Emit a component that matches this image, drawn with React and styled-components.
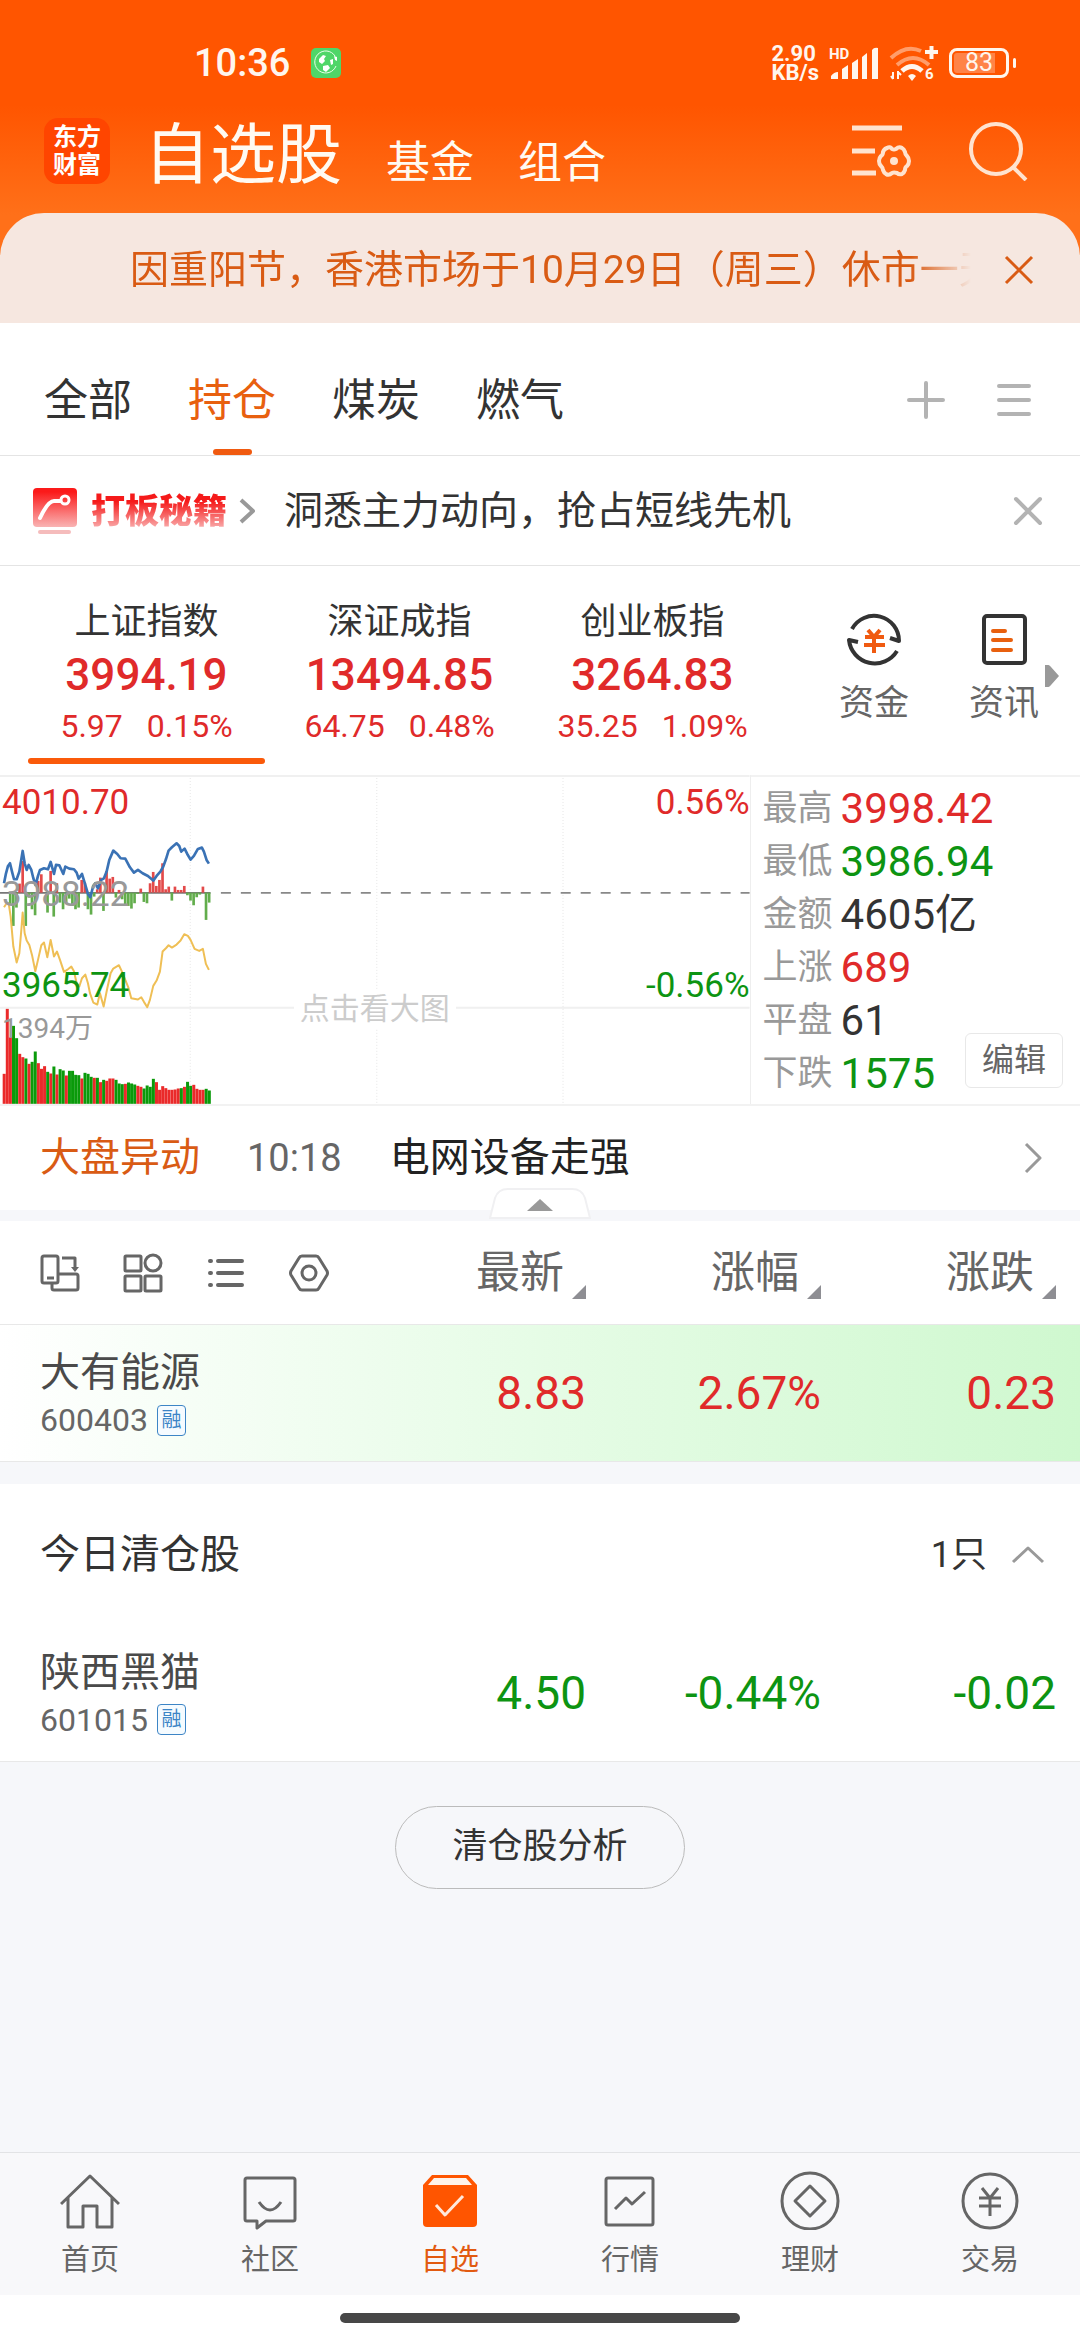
import styled, { createGlobalStyle, css } from 'styled-components';

const UP = '#e02a2a';
const DOWN = '#0d9412';
const BRAND = '#ff5500';

const GlobalStyle = createGlobalStyle`
  * {
    box-sizing: border-box;
  }
  body {
    margin: 0;
    background: #fff;
    color: #333;
    font-family: Roboto, "Noto Sans CJK SC", sans-serif;
  }
  button {
    border: 0;
    padding: 0;
    margin: 0;
    background: none;
    font: inherit;
    color: inherit;
  }
  a {
    color: inherit;
    text-decoration: none;
  }
  h1, h2 {
    margin: 0;
    font-weight: 400;
  }
  svg {
    display: block;
    flex: none;
  }
`;

const tone = (value) => (value > 0 ? UP : value < 0 ? DOWN : '#333');

const Page = styled.div`
  display: flex;
  flex-direction: column;
  min-height: 100vh;
`;

/* ---------- header ---------- */

const Header = styled.header`
  background: linear-gradient(${BRAND} 105px, #ff7019 215px);
`;

const StatusBar = styled.div`
  display: flex;
  align-items: center;
  height: 104px;
  padding: 21px 64px 0 194px;
  color: #fff6ee;
`;

const Clock = styled.span`
  font-size: 38px;
  line-height: 40px;
  font-weight: 500;
  margin-right: 21px;
`;

const StatusIcons = styled.div`
  display: flex;
  align-items: center;
  gap: 10px;
  margin-left: auto;
`;

const NetSpeed = styled.span`
  font-size: 22px;
  line-height: 19px;
  font-weight: 700;
`;

const Battery = styled.span`
  display: flex;
  align-items: center;
  justify-content: center;
  width: 60px;
  height: 30px;
  border: 3px solid currentColor;
  border-radius: 8px;
  background: linear-gradient(to right, #ff8347 83%, transparent 83%) content-box;
  padding: 2px;
  font-size: 25px;
  line-height: 20px;
`;

const BatteryTip = styled.span`
  width: 3px;
  height: 10px;
  margin-left: -6px;
  border-radius: 2px;
  background: currentColor;
`;

const TitleRow = styled.div`
  display: flex;
  align-items: center;
  height: 109px;
  padding: 0 52px 15px 44px;
`;

const Logo = styled.span`
  width: 66px;
  height: 66px;
  padding-top: 5px;
  border-radius: 14px;
  background: #ff4500;
  color: #fff;
  font-size: 24px;
  line-height: 28px;
  font-weight: 700;
  text-align: center;
`;

const Titles = styled.nav`
  display: flex;
  align-items: baseline;
  gap: 44px;
  flex: 1;
  margin-left: 34px;
  padding-top: 10px;
  color: #fffaf2;
`;

const Title = styled.button`
  font-size: ${(p) => (p.$main ? 66 : 44)}px;
  line-height: ${(p) => (p.$main ? 94 : 60)}px;
`;

const HeaderTools = styled.div`
  display: flex;
  align-items: center;
  gap: 56px;
`;

const Notice = styled.div`
  display: flex;
  align-items: center;
  height: 110px;
  padding: 3px 46px 0 130px;
  border-radius: 44px 44px 0 0;
  background: #f6e7e0;
  color: #d95b14;
`;

const NoticeText = styled.p`
  flex: 1;
  margin: 0 33px 0 0;
  overflow: hidden;
  white-space: nowrap;
  font-size: 39px;
  line-height: 54px;
  mask-image: linear-gradient(to right, #000 calc(100% - 60px), transparent);
`;

/* ---------- group tabs and promo ---------- */

const Tabs = styled.div`
  display: flex;
  align-items: center;
  gap: 56px;
  height: 133px;
  padding: 0 47px 0 44px;
  border-bottom: 1px solid #e4e4e4;
`;

const Tab = styled.button`
  display: flex;
  flex-direction: column;
  align-items: center;
  justify-content: flex-end;
  height: 132px;
  font-size: 44px;
  line-height: 60px;
  color: ${(p) => (p.$active ? '#e8600f' : '#333')};

  &::after {
    content: '';
    width: 39px;
    height: 6px;
    margin-top: 18px;
    border-radius: 3px;
    background: ${(p) => (p.$active ? '#f05a10' : 'transparent')};
  }
`;

const TabTools = styled.div`
  display: flex;
  gap: 50px;
  margin-left: auto;
  padding-top: 22px;
`;

const Promo = styled.div`
  display: flex;
  align-items: center;
  height: 110px;
  padding: 0 34px 0 32px;
  border-bottom: 1px solid #e4e4e4;
`;

const PromoTag = styled.span`
  margin: 0 12px 0 13px;
  font-size: 34px;
  line-height: 48px;
  font-weight: 900;
  color: transparent;
  background: linear-gradient(#f51a1a 30%, #f9aaaa 85%);
  background-clip: text;
`;

const PromoText = styled.a`
  flex: 1;
  margin-left: 29px;
  font-size: 39px;
  line-height: 54px;
`;

/* ---------- indices ---------- */

const IndexBar = styled.section`
  display: flex;
  height: 209px;
  padding: 28px 11px 0 20px;
`;

const IndexList = styled.div`
  display: flex;
  flex: 1;
  margin-right: 30px;
`;

const IndexItem = styled.button`
  display: flex;
  flex-direction: column;
  align-items: center;
  flex: 1;
  color: ${UP};

  &::after {
    content: '';
    align-self: stretch;
    height: 6px;
    margin: 6px 8px 0;
    border-radius: 3px;
    background: ${(p) => (p.$active ? '#fa5a0a' : 'transparent')};
  }
`;

const IndexName = styled.span`
  font-size: 36px;
  line-height: 56px;
  color: #333;
`;

const IndexValue = styled.span`
  font-size: 44px;
  line-height: 50px;
  font-weight: 500;
`;

const IndexChange = styled.span`
  display: flex;
  gap: 24px;
  font-size: 32px;
  line-height: 52px;
`;

const Shortcuts = styled.div`
  position: relative;
  display: flex;
`;

const Shortcut = styled.a`
  display: flex;
  flex-direction: column;
  align-items: center;
  width: 130px;
  padding-top: 17px;
  font-size: 35px;
  line-height: 54px;
  color: #666;

  svg {
    margin-bottom: 10px;
  }
`;

const MoreArrow = styled.svg`
  position: absolute;
  right: 10px;
  top: 71px;
`;

/* ---------- intraday chart ---------- */

const Market = styled.section`
  display: flex;
  border-bottom: 2px solid #f2f2f2;
`;

const ChartBox = styled.div`
  position: relative;
  flex: 0 0 69.5%;
  border-right: 1px solid #eee;

  svg {
    width: 100%;
    height: auto;
  }
`;

const ChartLabel = styled.span`
  position: absolute;
  top: ${(p) => p.$top}px;
  ${(p) => (p.$right ? 'right: 0' : 'left: 2px')};
  font-size: ${(p) => (p.$small ? 28 : 35)}px;
  line-height: 40px;
  color: ${(p) => p.$color};
`;

const ChartHint = styled.span`
  position: absolute;
  left: 50%;
  top: 214px;
  transform: translateX(-50%);
  padding: 0 6px;
  background: #fff;
  white-space: nowrap;
  font-size: 30px;
  line-height: 40px;
  color: #ccc;
`;

const Stats = styled.div`
  position: relative;
  flex: 1;
  padding: 5px 0 0 12px;
  border-top: 2px solid #f2f2f2;
`;

const Stat = styled.div`
  display: flex;
  align-items: center;
  gap: 8px;
  font-size: 42px;
  line-height: 53px;
  color: ${(p) => p.$color};
`;

const StatLabel = styled.span`
  font-size: 35px;
  color: #999;
`;

const EditButton = styled.button`
  position: absolute;
  right: 17px;
  bottom: 16px;
  width: 98px;
  height: 55px;
  border: 1px solid #e8e8e8;
  border-radius: 6px;
  background: #fff;
  font-size: 32px;
  line-height: 52px;
  color: #666;
`;

/* ---------- ticker ---------- */

const Ticker = styled.a`
  position: relative;
  display: flex;
  align-items: center;
  height: 115px;
  padding: 0 38px 11px 40px;
  background: linear-gradient(#fff 104px, #f6f7fa 104px);
  font-size: 40px;
  line-height: 54px;
  color: #222;
`;

const TickerKind = styled.span`
  color: #d95b14;
`;

const TickerTime = styled.span`
  margin: 0 48px 0 47px;
  font-size: 38px;
  color: #666;
`;

const Grow = styled.span`
  flex: 1;
`;

const Handle = styled.svg`
  position: absolute;
  left: 50%;
  bottom: 2px;
  transform: translateX(-50%);
`;

/* ---------- stock tables ---------- */

const StockTable = styled.table`
  width: 100%;
  table-layout: fixed;
  border-collapse: collapse;
  background: #fff;

  th, td {
    padding: 0;
    font-weight: 400;
    text-align: right;
  }
  th:first-child, td:first-child {
    padding-left: 40px;
    text-align: left;
  }
  th:last-child, td:last-child {
    padding-right: 24px;
  }
`;

const Col = styled.col`
  width: ${(p) => p.$width}px;
`;

const HeadRow = styled.tr`
  height: 104px;
  border-bottom: 1px solid #e8e8e8;
  color: #666;
`;

const ListTools = styled.div`
  display: flex;
  gap: 43px;
`;

const SortButton = styled.button`
  display: inline-flex;
  align-items: flex-end;
  gap: 8px;
  font-size: 44px;
  line-height: 60px;

  svg {
    margin-bottom: 4px;
  }
`;

const StockRow = styled.tr`
  height: 137px;
  border-bottom: 1px solid #e8e8e8;
  ${(p) => p.$flash && css`
    background: linear-gradient(to right, #fff, #e6fce6 50%, #cff8cf);
  `}
`;

const StockName = styled.div`
  padding-top: 2px;
  font-size: 40px;
  line-height: 52px;
  color: #4a4a4a;
`;

const StockCode = styled.div`
  display: flex;
  align-items: center;
  gap: 9px;
  font-size: 32px;
  line-height: 42px;
  color: #666;
`;

const MarginTag = styled.span`
  width: 29px;
  height: 31px;
  border: 1px solid #3d85c6;
  border-radius: 4px;
  background: #f5fbff;
  font-size: 20px;
  line-height: 29px;
  text-align: center;
  color: #3d85c6;
`;

const Quote = styled.td`
  font-size: 46px;
  line-height: 60px;
  color: ${(p) => p.$color};
`;

const ClearedHead = styled.div`
  display: flex;
  align-items: center;
  height: 140px;
  margin-top: 22px;
  padding: 2px 35px 0 40px;
  background: #fff;
  line-height: 54px;

  h2 {
    flex: 1;
    font-size: 40px;
  }
`;

const Count = styled.span`
  margin-right: 24px;
  font-size: 36px;
`;

const Content = styled.main`
  flex: 1;
  display: flex;
  flex-direction: column;
  background: #f6f7fa;
`;

const AnalyseButton = styled.button`
  align-self: center;
  width: 290px;
  height: 83px;
  margin: 44px 0;
  border: 1px solid #bbb;
  border-radius: 42px;
  font-size: 35px;
  line-height: 80px;
`;

/* ---------- bottom navigation ---------- */

const BottomNav = styled.nav`
  display: flex;
  height: 143px;
  border-top: 1px solid #e2e3e5;
  background: #f8f8fa;
`;

const NavItem = styled.a`
  display: flex;
  flex-direction: column;
  align-items: center;
  flex: 1;
  padding-top: 17px;
  font-size: 29px;
  line-height: 40px;
  color: ${(p) => (p.$active ? '#e25a10' : '#666')};

  svg {
    margin-bottom: 10px;
  }
`;

const HomeIndicator = styled.div`
  display: flex;
  justify-content: center;
  height: 45px;
  padding-top: 18px;

  &::after {
    content: '';
    width: 37%;
    height: 10px;
    border-radius: 5px;
    background: #474747;
  }
`;

/* ---------- icons ---------- */

function Icon({ w = 60, h = w, stroke = 'currentColor', sw = 3, children }) {
  return (
    <svg width={w} height={h} viewBox={`0 0 ${w} ${h}`} fill="none" stroke={stroke}
      strokeWidth={sw} strokeLinejoin="round" aria-hidden="true">
      {children}
    </svg>
  );
}

const GlobeIcon = () => (
  <Icon w={30} sw={1}>
    <rect width="30" height="30" rx="5" fill="#4fd668" stroke="none" />
    <path d="M24 8a11 11 0 1 0 1 10" stroke="#e8ffe8" />
    <path d="M8 11l4-4 3 1-2 3 1 2-3 3-3-2zM12 18l5-1 2 3-4 4-3-2zM19 12l3-1v5l-2 1zM23 8l3 1v4l-2-1z" fill="#fff" stroke="none" />
  </Icon>
);

const SignalIcon = () => (
  <Icon w={50} h={36} sw={0}>
    <g fill="currentColor">
      <path d="M2 34v-3q3-4 7-4v7zM13 34V24l6-4v14zM23 34V18l6-4v20zM33 34V12l5-4v26zM43 34V5q2-3 6-2v31z" />
    </g>
    <text x="0" y="14" fontSize="15" fontWeight="700" fill="currentColor">HD</text>
  </Icon>
);

const WifiIcon = () => (
  <Icon w={50} h={40} sw={4}>
    <path d="M2 15Q17 1 32 8" opacity=".45" />
    <path d="M8 22Q24 8 40 22" opacity=".45" />
    <path d="M13 28q10-9 20 0" strokeWidth="5" />
    <path d="M19 33q4-4 8 0l-4 5z" fill="currentColor" stroke="none" />
    <path d="M36 9h13M42.500 3v13" />
    <path d="M4 29v7M9 28v8M2 33l2 3M9 29l3 3" strokeWidth="2" />
    <text x="36" y="36" fontSize="15" fontWeight="700" fill="currentColor" stroke="none">6</text>
  </Icon>
);

const ListSettingIcon = () => (
  <Icon w={62} h={56} stroke="#ffe3cf" sw={5}>
    <path d="M2 5h50M2 28h23M2 50h24" />
    <path d="M37 25q3-2 5 1 2 1 4 0 3-3 6-1 2 1 3 4 0 2 2 4 2 2 2 5t-2 5q-2 1-2 4-1 3-3 4-3 1-5-1-3-1-5 0-3 3-6 1-2-1-3-4 0-2-2-4-2-2-2-5t2-5q2-1 2-4 1-3 4-4z" strokeWidth="4" />
    <circle cx="44" cy="38" r="4" fill="#ffe3cf" stroke="none" />
  </Icon>
);

const SearchIcon = () => (
  <Icon w={60} stroke="#ffe3cf" sw={4}>
    <circle cx="28" cy="28" r="25" />
    <path d="M45 46l13 13" />
  </Icon>
);

const CloseIcon = ({ sw = 3 }) => (
  <Icon w={30} sw={sw}>
    <path d="M2 2l26 26M28 2L2 28" />
  </Icon>
);

const PromoIcon = () => (
  <Icon w={46} h={48}>
    <defs>
      <linearGradient id="promo" x1="0" y1="0" x2="0" y2="1">
        <stop offset=".1" stopColor="#fb1a1a" />
        <stop offset="1" stopColor="#f9b4b4" />
      </linearGradient>
    </defs>
    <rect x="1" y="1" width="44" height="39" rx="4" fill="url(#promo)" stroke="none" />
    <path d="M8 31q8-17 14-17h6" stroke="#fff" strokeWidth="4" strokeLinecap="round" />
    <circle cx="33" cy="13" r="4" stroke="#fff" />
    <path d="M8 45h29" stroke="#f5bcbc" strokeWidth="4" strokeLinecap="round" />
  </Icon>
);

const ChevronIcon = ({ w = 16, h = 30, sw = 3 }) => (
  <Icon w={w} h={h} sw={sw} stroke="#999">
    <path d={`M2 2l${w - 4} ${h / 2 - 2}L2 ${h - 2}`} />
  </Icon>
);

const FundIcon = () => (
  <Icon w={56} stroke="#333" sw={4}>
    <path d="M6 18A25 25 0 0 1 53 30l-9-3" />
    <path d="M12 31l-9-2A26 26 0 0 0 51 40" />
    <path d="M22 19l6 7 6-7M19 26h19M18 34h21M28 26v16" stroke="#f05a10" />
  </Icon>
);

const NewsIcon = () => (
  <Icon w={56} stroke="#333" sw={4}>
    <rect x="8" y="5" width="41" height="47" rx="3" />
    <path d="M17 20h12M17 29h18M17 39h18" stroke="#e8600f" strokeWidth="4" strokeLinecap="round" />
  </Icon>
);

const CopyDeviceIcon = () => (
  <Icon w={40} sw={3}>
    <rect x="2" y="3" width="16" height="27" rx="2" />
    <path d="M7 25h7M18 21h18q2 0 2 2v12q0 2-2 2H14q-2 0-2-2v-5M22 5h13v10" />
    <path d="M31 14h8l-4 5z" fill="currentColor" stroke="none" />
  </Icon>
);

const GridIcon = () => (
  <Icon w={40} sw={3}>
    <rect x="2" y="3" width="16" height="15" rx="1" />
    <circle cx="30" cy="10" r="8" />
    <rect x="2" y="23" width="16" height="15" rx="1" />
    <rect x="22" y="23" width="16" height="15" rx="1" />
  </Icon>
);

const BulletsIcon = () => (
  <Icon w={40} sw={4}>
    <path d="M4 8h1M4 20h1M4 32h1M12 8h24M12 20h24M12 32h24" strokeLinecap="round" />
  </Icon>
);

const NutIcon = () => (
  <Icon w={40} sw={3}>
    <path d="M13 3h14q2 0 3 2l8 13q1 2 0 4l-8 13q-1 2-3 2H13q-2 0-3-2L2 22q-1-2 0-4l8-13q1-2 3-2z" />
    <circle cx="20" cy="20" r="7" />
  </Icon>
);

const SortMark = () => (
  <Icon w={14}>
    <path d="M14 0v14H0z" fill="#8e8e93" stroke="none" />
  </Icon>
);

const navIcons = {
  home: <path d="M1 34L30 6l29 28M8 28v29h15V36h14v21h15V28" />,
  community: (
    <>
      <path d="M7 8h46q2 0 2 2v39q0 2-2 2H26l-9 7v-7H7q-2 0-2-2V10q0-2 2-2z" />
      <path d="M19 32q11 16 22 0" />
    </>
  ),
  watch: (
    <>
      <path d="M3 15l9-10h36l9 10v38q0 4-4 4H7q-4 0-4-4z" fill={BRAND} stroke="none" />
      <path d="M14 8h32l6 7H8z" fill="#fff3ea" stroke="none" />
      <path d="M16 35l9 10 18-19" stroke="#ffe9dc" />
    </>
  ),
  quotes: (
    <>
      <rect x="6" y="8" width="47" height="47" rx="2" />
      <path d="M15 39l11-11 6 6 13-12" />
    </>
  ),
  wealth: (
    <>
      <circle cx="30" cy="31" r="28" />
      <path d="M30 16l15 15-15 15-15-15z" />
    </>
  ),
  trade: (
    <>
      <circle cx="30" cy="31" r="27" />
      <path d="M22 18l8 10 8-10M19 28h22M19 36h22M30 28v18" />
    </>
  ),
};

/* ---------- data ---------- */

const groups = ['全部', '持仓', '煤炭', '燃气'];

const indices = [
  { name: '上证指数', value: '3994.19', change: '5.97', percent: '0.15%' },
  { name: '深证成指', value: '13494.85', change: '64.75', percent: '0.48%' },
  { name: '创业板指', value: '3264.83', change: '35.25', percent: '1.09%' },
];

const stats = [
  { label: '最高', value: '3998.42', dir: 1 },
  { label: '最低', value: '3986.94', dir: -1 },
  { label: '金额', value: '4605亿', dir: 0 },
  { label: '上涨', value: '689', dir: 1 },
  { label: '平盘', value: '61', dir: 0 },
  { label: '下跌', value: '1575', dir: -1 },
];

const holding = { name: '大有能源', code: '600403', last: '8.83', percent: '2.67%', change: '0.23', dir: 1 };
const cleared = { name: '陕西黑猫', code: '601015', last: '4.50', percent: '-0.44%', change: '-0.02', dir: -1 };

const navItems = [
  { label: '首页', icon: 'home' },
  { label: '社区', icon: 'community' },
  { label: '自选', icon: 'watch' },
  { label: '行情', icon: 'quotes' },
  { label: '理财', icon: 'wealth' },
  { label: '交易', icon: 'trade' },
];

// one entry per minute; a negative volume is a falling minute
const volumes = [
  90, 285, 200, -234, -197, 150, 140, -136, 120, -126, -157, 122, 105, 113, -96, 91, -112, 88, -104, -100,
  85, -99, -99, -87, -86, 76, -93, -90, -81, 78, -78, 65, -72, 69, 76, 76, -72, -61, -59, 60,
  -64, -61, -58, 54, 51, -46, -55, -51, -75, 65, 42, 53, 47, 42, 42, 43, 46, -47, 51, -66,
  -54, 57, 45, 42, 42, -45, -40,
];

const momentum = [
  0, 0, -35, -100, -45, 27, 95, -100, -15, -50, -68, 35, 55, 0, -60, 65, -72, 28, -30, -50,
  -30, -18, -40, -50, -45, 38, 30, -50, -66, -12, 10, 45, -55, 65, 42, 47, -15, 8, -20, -40,
  -40, -48, -32, -4, 12, -28, -32, 28, 62, 20, 38, 88, 10, 18, -24, 18, 8, 8, 20, -8,
  -24, -38, -14, -6, 18, -82, -30,
];

const priceLine =
  '12,340 18,310 24,288 30,280 36,305 42,328 50,328 58,305 68,243 74,280 80,300 86,285 94,300 100,325 107,345 114,318 120,300 132,295 144,298 152,276 162,312 168,285 178,286 190,312 196,290 208,296 222,298 230,308 236,326 246,312 256,345 264,372 271,382 280,348 286,340 294,355 304,330 312,325 320,305 328,270 340,242 352,252 362,265 376,266 390,292 402,308 414,300 428,310 444,318 460,332 470,318 482,304 490,290 498,268 506,242 516,232 530,220 538,228 544,245 554,236 562,252 572,269 582,258 594,237 606,233 612,245 620,270 627,281';

const averageLine =
  '12,412 20,400 26,400 32,440 40,530 50,578 58,550 64,480 68,428 74,490 80,512 88,525 96,555 106,604 114,570 124,526 132,518 142,562 152,510 162,560 171,545 180,570 192,606 204,598 214,590 222,604 230,640 238,650 246,625 256,614 264,640 270,670 280,698 292,704 300,670 311,710 322,655 332,610 340,596 357,586 366,605 376,630 386,655 394,685 414,689 424,682 432,696 442,712 450,690 460,648 470,632 480,605 488,545 498,535 506,526 516,533 530,524 542,512 553,493 564,498 572,510 584,537 598,543 609,537 618,582 627,600';

const STEP = 9.33;
const ZERO = 368;
const BASE = 1002;

function IntradayChart() {
  return (
    <ChartBox>
      <svg viewBox="0 15 2250 987" aria-hidden="true">
        <path d="M0 18h2250M0 714h2250" stroke="#f0f0f0" strokeWidth="6" />
        <path d="M571 24v978M1131 24v978M1690 24v978" stroke="#e6e6e6" strokeWidth="3" strokeDasharray="3 6" />
        <path d="M0 369h632" stroke="#777" strokeWidth="5" />
        <path d="M663 369h1587" stroke="#888" strokeWidth="5" strokeDasharray="30 30" />
        {momentum.map((m, i) => (
          <rect key={i} x={8 + i * STEP} y={m > 0 ? ZERO - m : ZERO} width="8" height={Math.abs(m)}
            fill={m > 0 ? '#e34a4a' : '#62ad4c'} />
        ))}
        {volumes.map((v, i) => (
          <rect key={i} x={8 + i * STEP} y={BASE - Math.abs(v)} width="9" height={Math.abs(v)}
            fill={v > 0 ? '#ea2a2a' : '#0a9a0a'} />
        ))}
        <polyline points={averageLine} fill="none" stroke="#efbf55" strokeWidth="6" strokeLinejoin="round" />
        <polyline points={priceLine} fill="none" stroke="#3a72b5" strokeWidth="8" strokeLinejoin="round" />
      </svg>
      <ChartLabel $top={8} $color={UP}>4010.70</ChartLabel>
      <ChartLabel $top={8} $color={UP} $right>0.56%</ChartLabel>
      <ChartLabel $top={100} $color="#999">3988.22</ChartLabel>
      <ChartLabel $top={191} $color={DOWN}>3965.74</ChartLabel>
      <ChartLabel $top={191} $color={DOWN} $right>-0.56%</ChartLabel>
      <ChartLabel $top={234} $color="#999" $small>1394万</ChartLabel>
      <ChartHint>点击看大图</ChartHint>
    </ChartBox>
  );
}

const columns = (
  <colgroup>
    <col />
    <Col $width={235} />
    <Col $width={235} />
    <Col $width={259} />
  </colgroup>
);

function Stock({ stock, flash }) {
  const color = tone(stock.dir);
  return (
    <StockRow $flash={flash}>
      <td>
        <StockName>{stock.name}</StockName>
        <StockCode>
          {stock.code}
          <MarginTag>融</MarginTag>
        </StockCode>
      </td>
      <Quote $color={color}>{stock.last}</Quote>
      <Quote $color={color}>{stock.percent}</Quote>
      <Quote $color={color}>{stock.change}</Quote>
    </StockRow>
  );
}

export default function App() {
  return (
    <Page>
      <GlobalStyle />
      <Header>
        <StatusBar>
          <Clock>10:36</Clock>
          <GlobeIcon />
          <StatusIcons>
            <NetSpeed>2.90<br />KB/s</NetSpeed>
            <SignalIcon />
            <WifiIcon />
            <Battery>83</Battery>
            <BatteryTip />
          </StatusIcons>
        </StatusBar>
        <TitleRow>
          <Logo>东方<br />财富</Logo>
          <Titles>
            <Title $main>自选股</Title>
            <Title>基金</Title>
            <Title>组合</Title>
          </Titles>
          <HeaderTools>
            <button aria-label="设置"><ListSettingIcon /></button>
            <button aria-label="搜索"><SearchIcon /></button>
          </HeaderTools>
        </TitleRow>
        <Notice>
          <NoticeText>因重阳节，香港市场于10月29日（周三）休市一天</NoticeText>
          <button aria-label="关闭"><CloseIcon /></button>
        </Notice>
      </Header>

      <Tabs>
        {groups.map((group) => (
          <Tab key={group} $active={group === '持仓'}>{group}</Tab>
        ))}
        <TabTools>
          <button aria-label="添加">
            <Icon w={38} stroke="#b3b3b3" sw={4}>
              <path d="M19 2v34M2 19h34" strokeLinecap="round" />
            </Icon>
          </button>
          <button aria-label="菜单">
            <Icon w={38} stroke="#b3b3b3" sw={4}>
              <path d="M4 5h30M4 19h30M4 33h30" strokeLinecap="round" />
            </Icon>
          </button>
        </TabTools>
      </Tabs>

      <Promo>
        <PromoIcon />
        <PromoTag>打板秘籍</PromoTag>
        <ChevronIcon w={16} h={26} sw={4} />
        <PromoText href="#promo">洞悉主力动向，抢占短线先机</PromoText>
        <button aria-label="关闭">
          <Icon w={36} stroke="#b3b3b3" sw={4}>
            <path d="M6 6l24 24M30 6L6 30" strokeLinecap="round" />
          </Icon>
        </button>
      </Promo>

      <IndexBar>
        <IndexList>
          {indices.map((item, i) => (
            <IndexItem key={item.name} $active={i === 0}>
              <IndexName>{item.name}</IndexName>
              <IndexValue>{item.value}</IndexValue>
              <IndexChange>
                <span>{item.change}</span>
                <span>{item.percent}</span>
              </IndexChange>
            </IndexItem>
          ))}
        </IndexList>
        <Shortcuts>
          <Shortcut href="#fund"><FundIcon />资金</Shortcut>
          <Shortcut href="#news"><NewsIcon />资讯</Shortcut>
          <MoreArrow width="14" height="22" viewBox="0 0 14 22" aria-hidden="true">
            <path d="M0 0q4-1 6 2l8 9-8 9q-2 3-6 2z" fill="#999" />
          </MoreArrow>
        </Shortcuts>
      </IndexBar>

      <Market>
        <IntradayChart />
        <Stats>
          {stats.map((stat) => (
            <Stat key={stat.label} $color={tone(stat.dir)}>
              <StatLabel>{stat.label}</StatLabel>
              {stat.value}
            </Stat>
          ))}
          <EditButton>编辑</EditButton>
        </Stats>
      </Market>

      <Ticker href="#ticker">
        <TickerKind>大盘异动</TickerKind>
        <TickerTime>10:18</TickerTime>
        <span>电网设备走强</span>
        <Grow />
        <ChevronIcon w={18} h={32} />
        <Handle width="102" height="32" viewBox="0 0 102 32" aria-hidden="true">
          <path d="M1 31l5-20Q9 2 19 2h64q10 0 13 9l5 20z" fill="#fff" stroke="#f0f0f2" strokeWidth="2" />
          <path d="M51 12l13 12H38z" fill="#999" />
        </Handle>
      </Ticker>

      <Content>
        <StockTable>
          {columns}
          <thead>
            <HeadRow>
              <th>
                <ListTools>
                  <CopyDeviceIcon />
                  <GridIcon />
                  <BulletsIcon />
                  <NutIcon />
                </ListTools>
              </th>
              {['最新', '涨幅', '涨跌'].map((head) => (
                <th key={head}>
                  <SortButton>{head}<SortMark /></SortButton>
                </th>
              ))}
            </HeadRow>
          </thead>
          <tbody>
            <Stock stock={holding} flash />
          </tbody>
        </StockTable>

        <ClearedHead>
          <h2>今日清仓股</h2>
          <Count>1只</Count>
          <Icon w={34} h={18} stroke="#999">
            <path d="M2 16L17 2l15 14" />
          </Icon>
        </ClearedHead>
        <StockTable>
          {columns}
          <tbody>
            <Stock stock={cleared} />
          </tbody>
        </StockTable>

        <AnalyseButton>清仓股分析</AnalyseButton>
      </Content>

      <BottomNav>
        {navItems.map((item) => (
          <NavItem key={item.icon} href={`#${item.icon}`} $active={item.icon === 'watch'}>
            <Icon>{navIcons[item.icon]}</Icon>
            {item.label}
          </NavItem>
        ))}
      </BottomNav>
      <HomeIndicator />
    </Page>
  );
}
